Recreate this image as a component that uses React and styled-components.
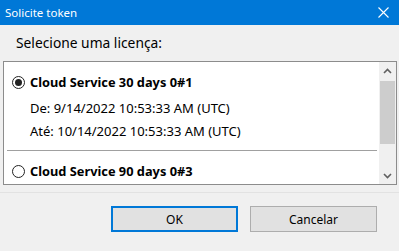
import React from 'react';
import styled, { createGlobalStyle } from 'styled-components';

const GlobalStyle = createGlobalStyle`
  html, body {
    margin: 0;
    padding: 0;
    background: #f0f0f0;
  }
  body {
    font-family: "Noto Sans", "Open Sans", sans-serif;
    font-size: 12px;
    color: #000;
  }
`;

const Dialog = styled.div`
  width: 399px;
  height: 251px;
  background: #f0f0f0;
  display: flex;
  flex-direction: column;
  box-sizing: border-box;
  overflow: hidden;
`;

const TitleBar = styled.div`
  height: 25px;
  flex: none;
  background: #0078d7;
  color: #fff;
  display: flex;
  align-items: center;
  justify-content: space-between;
  padding: 0 10px 0 5px;
  font-size: 11.5px;
`;

const CloseIcon = () => (
  <svg width="11" height="11" viewBox="0 0 11 11">
    <path d="M0.5 0.5 L10.5 10.5 M10.5 0.5 L0.5 10.5" stroke="#fff" strokeWidth="1.1" />
  </svg>
);

const Prompt = styled.div`
  height: 36px;
  flex: none;
  display: flex;
  align-items: center;
  padding-left: 16px;
  padding-bottom: 2px;
  box-sizing: border-box;
  font-size: 13.8px;
`;

const ListBox = styled.div`
  height: 124px;
  flex: none;
  margin: 0 2px 0 3px;
  box-sizing: border-box;
  border: 1px solid #8c8c8c;
  background: #fff;
  display: flex;
  font-size: 13px;
`;

const Items = styled.div`
  flex: 1;
  overflow: hidden;
`;

const Item = styled.div`
  display: flex;
  flex-direction: column;
  padding-top: 12px;
`;

const Header = styled.div`
  display: flex;
  align-items: center;
  height: 16px;
  padding-left: 8px;
  font-weight: bold;
  font-size: 12.8px;
`;

const Radio = styled.span`
  width: 13px;
  height: 13px;
  box-sizing: border-box;
  border: 1px solid #222;
  border-radius: 50%;
  margin-right: 5px;
  display: flex;
  align-items: center;
  justify-content: center;
  flex: none;

  &::after {
    content: '';
    width: 7px;
    height: 7px;
    border-radius: 50%;
    background: ${p => (p.checked ? '#222' : 'transparent')};
  }
`;

const Detail = styled.div`
  height: 16px;
  line-height: 16px;
  padding-left: 26px;
  margin-top: ${p => p.gap}px;
`;

const Separator = styled.div`
  height: 1px;
  background: #a0a0a0;
  margin: 11px 2px 0 3px;
`;

const ScrollBar = styled.div`
  width: 17px;
  flex: none;
  background: #f0f0f0;
  display: flex;
  flex-direction: column;
  align-items: center;
`;

const ArrowButton = styled.div`
  height: 17px;
  width: 100%;
  display: flex;
  align-items: center;
  justify-content: center;
  flex: none;
`;

const Thumb = styled.div`
  width: 15px;
  height: 63px;
  margin-top: 2px;
  background: #cdcdcd;
  flex: none;
`;

const Track = styled.div`
  flex: 1;
`;

const Chevron = ({ up }) => (
  <svg width="9" height="6" viewBox="0 0 9 6">
    <path
      d={up ? 'M1 5 L4.5 1.5 L8 5' : 'M1 1 L4.5 4.5 L8 1'}
      stroke="#606060"
      strokeWidth="1.6"
      fill="none"
    />
  </svg>
);

const Rule = styled.div`
  height: 1px;
  background: #e2e2e2;
  margin-top: 7px;
  flex: none;
`;

const Buttons = styled.div`
  display: flex;
  justify-content: flex-end;
  gap: 12px;
  padding: 13px 22px 0 0;
`;

const Button = styled.button`
  width: 127px;
  height: 26px;
  box-sizing: border-box;
  background: #e1e1e1;
  border: ${p => (p.primary ? '2px solid #0078d7' : '1px solid #adadad')};
  font-family: inherit;
  font-size: 12px;
  color: #000;
  padding: 0;
`;

const licenses = [
  {
    name: 'Cloud Service 30 days 0#1',
    from: 'De: 9/14/2022 10:53:33 AM (UTC)',
    to: 'Até: 10/14/2022 10:53:33 AM (UTC)',
    checked: true,
  },
  {
    name: 'Cloud Service 90 days 0#3',
    checked: false,
  },
];

const App = () => (
  <>
    <GlobalStyle />
    <Dialog>
      <TitleBar>
        <span>Solicite token</span>
        <CloseIcon />
      </TitleBar>
      <Prompt>Selecione uma licença:</Prompt>
      <ListBox>
        <Items>
          {licenses.map(l => (
            <Item key={l.name}>
              <Header>
                <Radio checked={l.checked} />
                {l.name}
              </Header>
              {l.from && <Detail gap={10}>{l.from}</Detail>}
              {l.to && <Detail gap={7}>{l.to}</Detail>}
              {l.from && <Separator />}
            </Item>
          ))}
        </Items>
        <ScrollBar>
          <ArrowButton><Chevron up /></ArrowButton>
          <Thumb />
          <Track />
          <ArrowButton><Chevron /></ArrowButton>
        </ScrollBar>
      </ListBox>
      <Rule />
      <Buttons>
        <Button primary>OK</Button>
        <Button>Cancelar</Button>
      </Buttons>
    </Dialog>
  </>
);

export default App;
